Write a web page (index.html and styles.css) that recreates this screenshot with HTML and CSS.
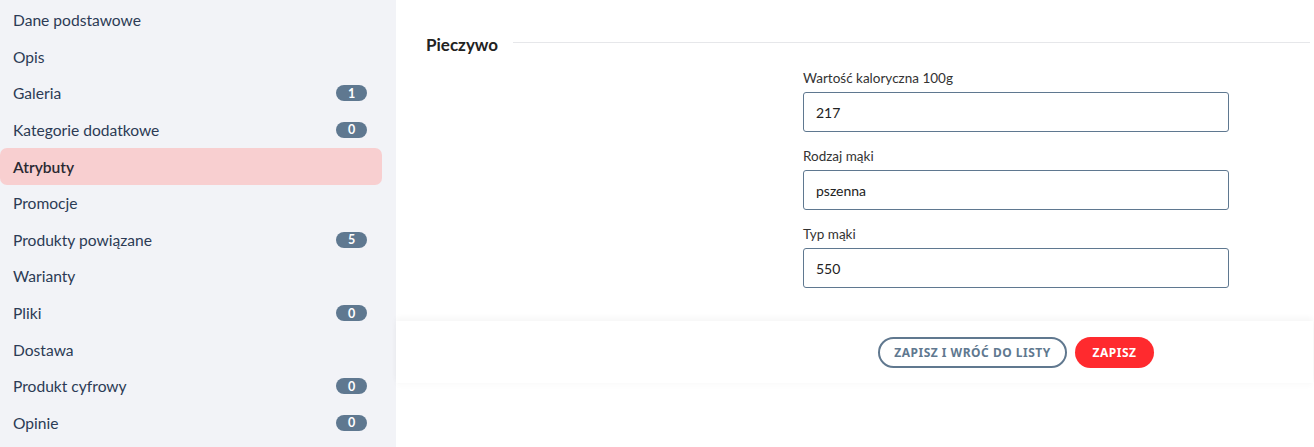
FILE: index.html
```html
<!DOCTYPE html>
<html lang="pl">
<head>
<meta charset="utf-8">
<link rel="stylesheet" href="styles.css">
</head>
<body>
<div class="layout">
  <nav class="sidebar">
    <a class="nav-item">Dane podstawowe</a>
    <a class="nav-item">Opis</a>
    <a class="nav-item">Galeria <span class="badge">1</span></a>
    <a class="nav-item">Kategorie dodatkowe <span class="badge">0</span></a>
    <a class="nav-item active">Atrybuty</a>
    <a class="nav-item">Promocje</a>
    <a class="nav-item">Produkty powiązane <span class="badge">5</span></a>
    <a class="nav-item">Warianty</a>
    <a class="nav-item">Pliki <span class="badge">0</span></a>
    <a class="nav-item">Dostawa</a>
    <a class="nav-item">Produkt cyfrowy <span class="badge">0</span></a>
    <a class="nav-item">Opinie <span class="badge">0</span></a>
  </nav>
  <main class="main">
    <section class="section">
      <div class="section-head">
        <h2 class="section-title">Pieczywo</h2>
        <div class="section-line"></div>
      </div>
      <div class="grid">
        <div></div>
        <div class="fields">
          <label class="field">
            <span class="field-label">Wartość kaloryczna 100g</span>
            <input class="input" type="text" value="217">
          </label>
          <label class="field">
            <span class="field-label">Rodzaj mąki</span>
            <input class="input" type="text" value="pszenna">
          </label>
          <label class="field">
            <span class="field-label">Typ mąki</span>
            <input class="input" type="text" value="550">
          </label>
        </div>
      </div>
    </section>
    <footer class="actions">
      <div class="grid">
        <div></div>
        <div class="buttons">
          <button class="btn btn-outline">Zapisz i wróć do listy</button>
          <button class="btn btn-primary">Zapisz</button>
        </div>
      </div>
    </footer>
  </main>
</div>
</body>
</html>
```
FILE: styles.css
```css
* { box-sizing: border-box; }
html, body { margin: 0; padding: 0; background: #fff; }
body {
  font-family: "Source Sans Pro", "Lato", "Noto Sans", sans-serif;
  color: #2b3a52;
  width: 1314px;
  height: 447px;
  overflow: hidden;
}
.layout {
  display: flex;
  height: 447px;
}
.sidebar {
  width: 396px;
  flex: none;
  background: #f2f3f7;
  padding: 1.7px 14px 0 0;
  display: flex;
  flex-direction: column;
}
.nav-item {
  height: 36.64px;
  display: flex;
  align-items: center;
  justify-content: space-between;
  padding: 0 15px 0 13px;
  font-size: 15.6px;
  color: #2c3b55;
  border-radius: 7px;
}
.nav-item.active {
  background: #f8cfd0;
  color: #2a2a33;
  font-weight: 600;
}
.badge {
  width: 31px;
  height: 16px;
  border-radius: 8px;
  background: #5f7890;
  color: #fff;
  font-size: 12.5px;
  font-weight: 700;
  display: flex;
  align-items: center;
  justify-content: center;
}
.main {
  flex: 1;
  display: flex;
  flex-direction: column;
}
.section {
  padding: 34px 4px 33px 30px;
}
.section-head {
  display: flex;
  align-items: center;
  gap: 15px;
}
.section-title {
  margin: 0;
  font-size: 17px;
  font-weight: 700;
  color: #222;
  font-family: "Lato", "Noto Sans", sans-serif;
  line-height: 22px;
}
.section-line {
  flex: 1;
  height: 1px;
  background: #e6e7ea;
  margin-top: -6px;
}
.grid {
  display: grid;
  grid-template-columns: 377px 426px;
}
.fields {
  display: flex;
  flex-direction: column;
  gap: 16px;
  padding-top: 14px;
}
.field {
  display: flex;
  flex-direction: column;
  gap: 5px;
}
.field-label {
  font-size: 13.5px;
  color: #333;
  line-height: 17px;
}
.input {
  height: 40px;
  border: 1px solid #5f7890;
  border-radius: 3px;
  padding: 0 12px;
  font-family: inherit;
  font-size: 14px;
  color: #222;
  background: #fff;
}
.actions {
  height: 62px;
  box-shadow: 0 -3px 6px rgba(0,0,0,0.04), 0 3px 6px rgba(0,0,0,0.02);
  display: flex;
  align-items: center;
  padding-left: 30px;
  margin-right: 1px;
}
.actions .grid { width: 100%; }
.buttons {
  display: flex;
  justify-content: center;
  gap: 8px;
}
.btn {
  height: 31px;
  border-radius: 16px;
  font-family: "Noto Sans", sans-serif;
  font-weight: 700;
  font-size: 12px;
  letter-spacing: 0.5px;
  text-transform: uppercase;
  cursor: pointer;
}
.btn-outline {
  width: 189px;
  background: #fff;
  border: 2px solid #60788f;
  color: #60788f;
}
.btn-primary {
  width: 79px;
  background: #ff2a2e;
  border: none;
  color: #fff;
}
```
